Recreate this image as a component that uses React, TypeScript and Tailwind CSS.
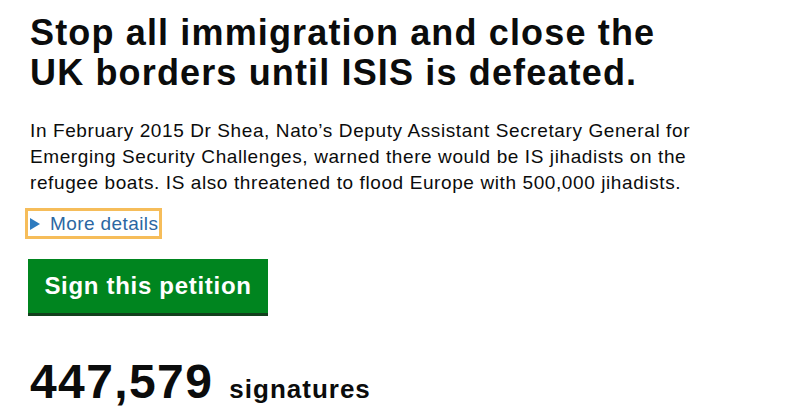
export default function App() {
  return (
    <div className="min-h-[420px] bg-white pl-[30px] pt-[13px] font-['Liberation_Sans',Arial,sans-serif] text-[#0b0c0c]">
      <div className="w-[690px]">
        <h1 className="text-[36px] font-bold leading-[40px] tracking-[1.15px]">
          Stop all immigration and close the UK borders until ISIS is defeated.
        </h1>

        <p className="mt-[25px] text-[19px] leading-[26px] tracking-[0.6px]">
          In February 2015 Dr Shea, Nato’s Deputy Assistant Secretary General for Emerging Security Challenges, warned
          there would be IS jihadists on the refugee boats. IS also threatened to flood Europe with 500,000 jihadists.
        </p>

        {/* Details toggle, shown with focus outline */}
        <div className="mt-[12px] ml-[-5px] inline-flex items-center border-[3px] border-[#f6bd5a] pr-[1px] pl-[2px] h-[31px]">
          <svg width="10" height="12" viewBox="0 0 10 12" className="mt-[1px]">
            <path d="M0 0 L10 6 L0 12 Z" fill="#2e7bbf" />
          </svg>
          <span className="ml-[10px] text-[19px] leading-[25px] tracking-[0.4px] text-[#2b67a2]">More details</span>
        </div>

        {/* Sign button */}
        <div className="mt-[20px]">
          <button className="h-[54px] w-[240px] ml-[-2px] bg-[#00851f] text-[24px] font-bold leading-none tracking-[0.7px] text-white shadow-[0_3px_0_#12401d]">
            Sign this petition
          </button>
        </div>

        <p className="mt-[41px] flex items-baseline gap-[16px] font-bold">
          <span className="text-[48px] leading-[56px] tracking-[1.4px]">447,579</span>
          <span className="text-[26px] tracking-[1px]">signatures</span>
        </p>
      </div>
    </div>
  );
}
